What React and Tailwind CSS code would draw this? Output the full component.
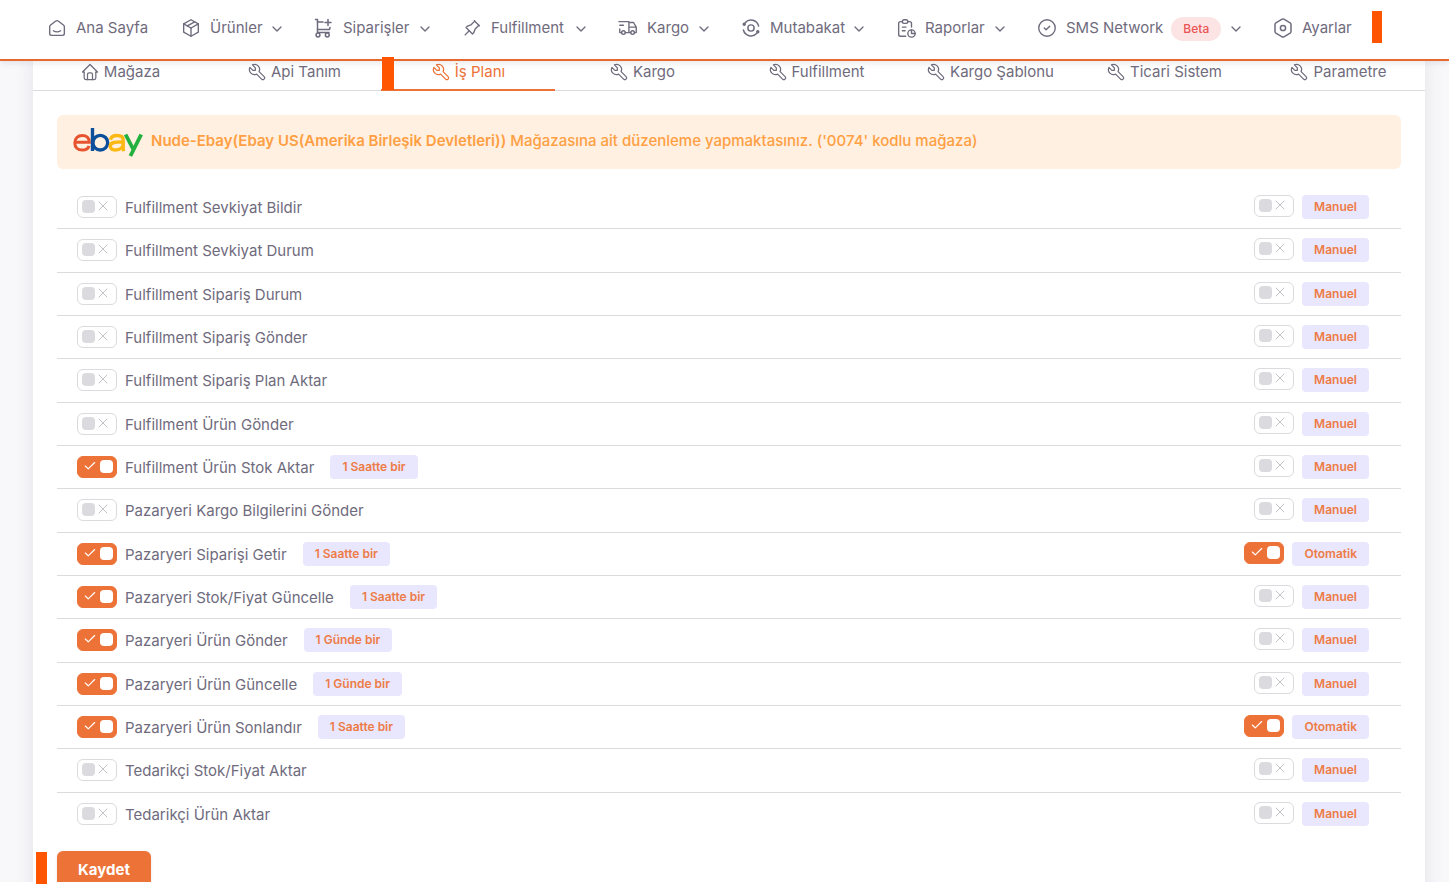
import React from "react";
import {
  TbSmartHome, TbPackage, TbPin, TbTruckDelivery,
  TbReport, TbCircleCheck, TbChevronDown, TbHome, TbTool,
} from "react-icons/tb";
import { Check, X } from "lucide-react";

function ReconcileIcon({ className }) {
  return (
    <svg viewBox="0 0 24 24" width="22" height="22" fill="none" stroke="currentColor" strokeWidth="1.6" strokeLinecap="round" className={className}>
      <circle cx="12" cy="12" r="3.4" />
      <path d="M5.6 6.2A8.6 8.6 0 0 1 20.3 9.8" />
      <path d="M18.4 17.8A8.6 8.6 0 0 1 3.7 14.2" />
      <circle cx="4.6" cy="8" r="1.1" fill="currentColor" />
      <circle cx="19.4" cy="16" r="1.1" fill="currentColor" />
    </svg>
  );
}

function CartPlusIcon({ className }) {
  return (
    <svg viewBox="0 0 22 22" width="22" height="22" fill="none" stroke="currentColor" strokeWidth="1.5" strokeLinecap="round" strokeLinejoin="round" className={className}>
      <path d="M2.5 2.5H4.5V15.5H16" />
      <path d="M4.5 5H10M4.5 12.5H16.5L17 10.5" />
      <path d="M15 2.5V8.5M12 5.5H18" />
      <circle cx="5" cy="18" r="1.9" />
      <circle cx="14.3" cy="18" r="1.9" />
    </svg>
  );
}

function HexIcon({ className }) {
  return (
    <svg viewBox="0 0 22 22" width="22" height="22" fill="none" stroke="currentColor" strokeWidth="1.5" strokeLinejoin="round" className={className}>
      <path d="M10.1 2.2a1.9 1.9 0 0 1 1.8 0l6.2 3.6a1.9 1.9 0 0 1 .9 1.6v7.2a1.9 1.9 0 0 1-.9 1.6l-6.2 3.6a1.9 1.9 0 0 1-1.8 0l-6.2-3.6a1.9 1.9 0 0 1-.9-1.6V7.4a1.9 1.9 0 0 1 .9-1.6z" />
      <circle cx="11" cy="11" r="2.6" />
    </svg>
  );
}

const NAV = [
  { label: "Ana Sayfa", Icon: TbSmartHome },
  { label: "Ürünler", Icon: TbPackage, menu: true },
  { label: "Siparişler", Icon: CartPlusIcon, menu: true },
  { label: "Fulfillment", Icon: TbPin, menu: true },
  { label: "Kargo", Icon: TbTruckDelivery, menu: true },
  { label: "Mutabakat", Icon: ReconcileIcon, menu: true },
  { label: "Raporlar", Icon: TbReport, menu: true },
  { label: "SMS Network", Icon: TbCircleCheck, menu: true, badge: "Beta" },
  { label: "Ayarlar", Icon: HexIcon },
];

const TABS = ["Mağaza", "Api Tanım", "İş Planı", "Kargo", "Fulfillment", "Kargo Şablonu", "Ticari Sistem", "Parametre"];

const JOBS = [
  { name: "Fulfillment Sevkiyat Bildir" },
  { name: "Fulfillment Sevkiyat Durum" },
  { name: "Fulfillment Sipariş Durum" },
  { name: "Fulfillment Sipariş Gönder" },
  { name: "Fulfillment Sipariş Plan Aktar" },
  { name: "Fulfillment Ürün Gönder" },
  { name: "Fulfillment Ürün Stok Aktar", every: "1 Saatte bir" },
  { name: "Pazaryeri Kargo Bilgilerini Gönder" },
  { name: "Pazaryeri Siparişi Getir", every: "1 Saatte bir", auto: true },
  { name: "Pazaryeri Stok/Fiyat Güncelle", every: "1 Saatte bir" },
  { name: "Pazaryeri Ürün Gönder", every: "1 Günde bir" },
  { name: "Pazaryeri Ürün Güncelle", every: "1 Günde bir" },
  { name: "Pazaryeri Ürün Sonlandır", every: "1 Saatte bir", auto: true },
  { name: "Tedarikçi Stok/Fiyat Aktar" },
  { name: "Tedarikçi Ürün Aktar" },
];

function EbayLogo() {
  return (
    <svg viewBox="0 0 70 30" className="h-[30px] w-[70px] shrink-0" fill="none" strokeWidth="3.4" role="img" aria-label="ebay">
      <path stroke="#e8532f" strokeWidth="3" d="M2 15.3H16.3C16.3 10.8 13.4 8.5 9.2 8.5C4.8 8.5 1.8 11.4 1.8 15.9C1.8 20.3 4.8 23 9.2 23C12.6 23 15.3 21.5 16 18.8" />
      <path stroke="#0d4f9a" d="M19.5 1V24" />
      <ellipse stroke="#0d4f9a" cx="27.3" cy="15.7" rx="7.4" ry="7.3" />
      <path stroke="#fcb813" d="M37.5 12.8C38 9.6 40.5 8.5 44 8.5C48 8.5 50.2 9.9 50.2 13V20C50.2 22 50.3 23 50.5 24.3M50.3 14.8C44 15 37.3 14.7 37.3 19C37.3 21.6 39 23 42.5 23C47 23 50.2 20.6 50.2 16.5" />
      <path stroke="#22b03f" strokeWidth="3.8" d="M52.6 7.5L60.6 23M68.2 7.5L57.4 29" />
    </svg>
  );
}

function Toggle({ label, defaultChecked }) {
  return (
    <span className="relative inline-flex h-[22px] w-10 shrink-0">
      <input
        type="checkbox"
        aria-label={label}
        defaultChecked={defaultChecked}
        className="peer h-[22px] w-10 cursor-pointer appearance-none rounded-md border border-[#dbdade] bg-white checked:border-[#ed7238] checked:bg-[#ed7238]"
      />
      <span className="pointer-events-none absolute left-[5px] top-1 size-[13px] rounded bg-[#dbdade] peer-checked:left-[23px] peer-checked:bg-white" />
      <X className="pointer-events-none absolute left-[18px] top-[2px] size-4 text-[#c4c3ca] peer-checked:hidden" strokeWidth={1.5} />
      <Check className="pointer-events-none absolute left-[6px] top-[3px] hidden size-[14px] text-white peer-checked:block" strokeWidth={2} />
    </span>
  );
}

function Tag({ children }) {
  return (
    <span className="flex h-6 items-center rounded bg-[#e9e7fd] px-3 text-xs font-semibold text-[#ed7b47]">{children}</span>
  );
}

export default function App() {
  return (
    <div className="relative flex h-screen flex-col overflow-hidden bg-white pb-[3px] font-['Inter','Liberation_Sans',sans-serif] text-[15px] leading-[22px] text-[#6f6b7d]">
      <header className="z-10 shrink-0 border-b-2 border-[#e8692f] bg-white shadow-[0_2px_6px_rgba(75,70,92,0.12)]">
        <nav className="grid h-[59px] grid-cols-[134px_133px_148px_156px_123px_155px_141px_236px_auto] items-center pb-[3px] pl-[46px]">
          {NAV.map(({ label, Icon, menu, badge }) => (
            <a key={label} href="#" className="flex items-center whitespace-nowrap pr-7">
              <Icon size={22} strokeWidth={1.5} className="mr-2 shrink-0" />
              {label}
              {badge && <span className="ml-2 mt-px rounded-full bg-[#fce4e4] px-3 text-xs font-medium leading-6 text-[#ea5455]">{badge}</span>}
              {menu && <TbChevronDown size={16} strokeWidth={2} className="ml-auto mt-0.5 shrink-0" />}
            </a>
          ))}
        </nav>
      </header>

      <div className="min-h-0 flex-1 overflow-hidden bg-[#f8f7fa] pl-[33px] pr-6">
        <main className="min-h-full bg-white shadow-[0_0_18px_rgba(75,70,92,0.12)]">
          <div className="grid grid-cols-8 border-b border-[#dbdade]">
            {TABS.map((tab, i) => {
              const Icon = i === 0 ? TbHome : TbTool;
              return (
                <a
                  key={tab}
                  href="#"
                  className={
                    "-mb-px flex h-[30px] items-start justify-center gap-1 border-b-2 whitespace-nowrap " +
                    (i === 2 ? "border-[#ed7238] text-[#ed7238]" : "border-transparent")
                  }
                >
                  <Icon size={20} strokeWidth={1.5} className="mt-px shrink-0" />
                  {tab}
                </a>
              );
            })}
          </div>

          <div className="px-6 pt-6 pb-8">
            <div className="flex h-[54px] items-center gap-2 rounded-md bg-[#fff0e1] px-4 text-[#ff9f43]">
              <EbayLogo />
              <p className="pb-0.5 font-medium">
                <strong className="font-semibold">Nude-Ebay(Ebay US(Amerika Birleşik Devletleri))</strong> Mağazasına ait düzenleme yapmaktasınız. ('0074' kodlu mağaza)
              </p>
            </div>

            <ul className="mt-[17px] grid min-h-[650px] auto-rows-fr divide-y divide-[#dbdade]">
              {JOBS.map(({ name, every, auto }) => (
                <li key={name} className="flex items-center justify-between pl-5 pr-8">
                  <div className="flex items-center">
                    <Toggle label={name} defaultChecked={Boolean(every)} />
                    <span className="ml-2 mr-4 pt-0.5">{name}</span>
                    {every && <Tag>{every}</Tag>}
                  </div>
                  <div className="flex items-start gap-2">
                    <Toggle label={name + " otomatik"} defaultChecked={Boolean(auto)} />
                    <Tag>{auto ? "Otomatik" : "Manuel"}</Tag>
                  </div>
                </li>
              ))}
            </ul>

            <button type="button" className="mt-[15px] h-[38px] rounded-md bg-[#ed7238] px-[21px] font-bold text-white shadow-sm">
              Kaydet
            </button>
          </div>
        </main>
      </div>

      <span className="absolute left-[1372px] top-[11px] z-20 h-8 w-[10px] bg-[#ff5500]" />
      <span className="absolute left-[382px] top-[57px] z-20 h-[33px] w-3 bg-[#ff5500]" />
      <span className="absolute left-9 bottom-px z-20 h-8 w-[11px] bg-[#ff5500]" />
    </div>
  );
}
